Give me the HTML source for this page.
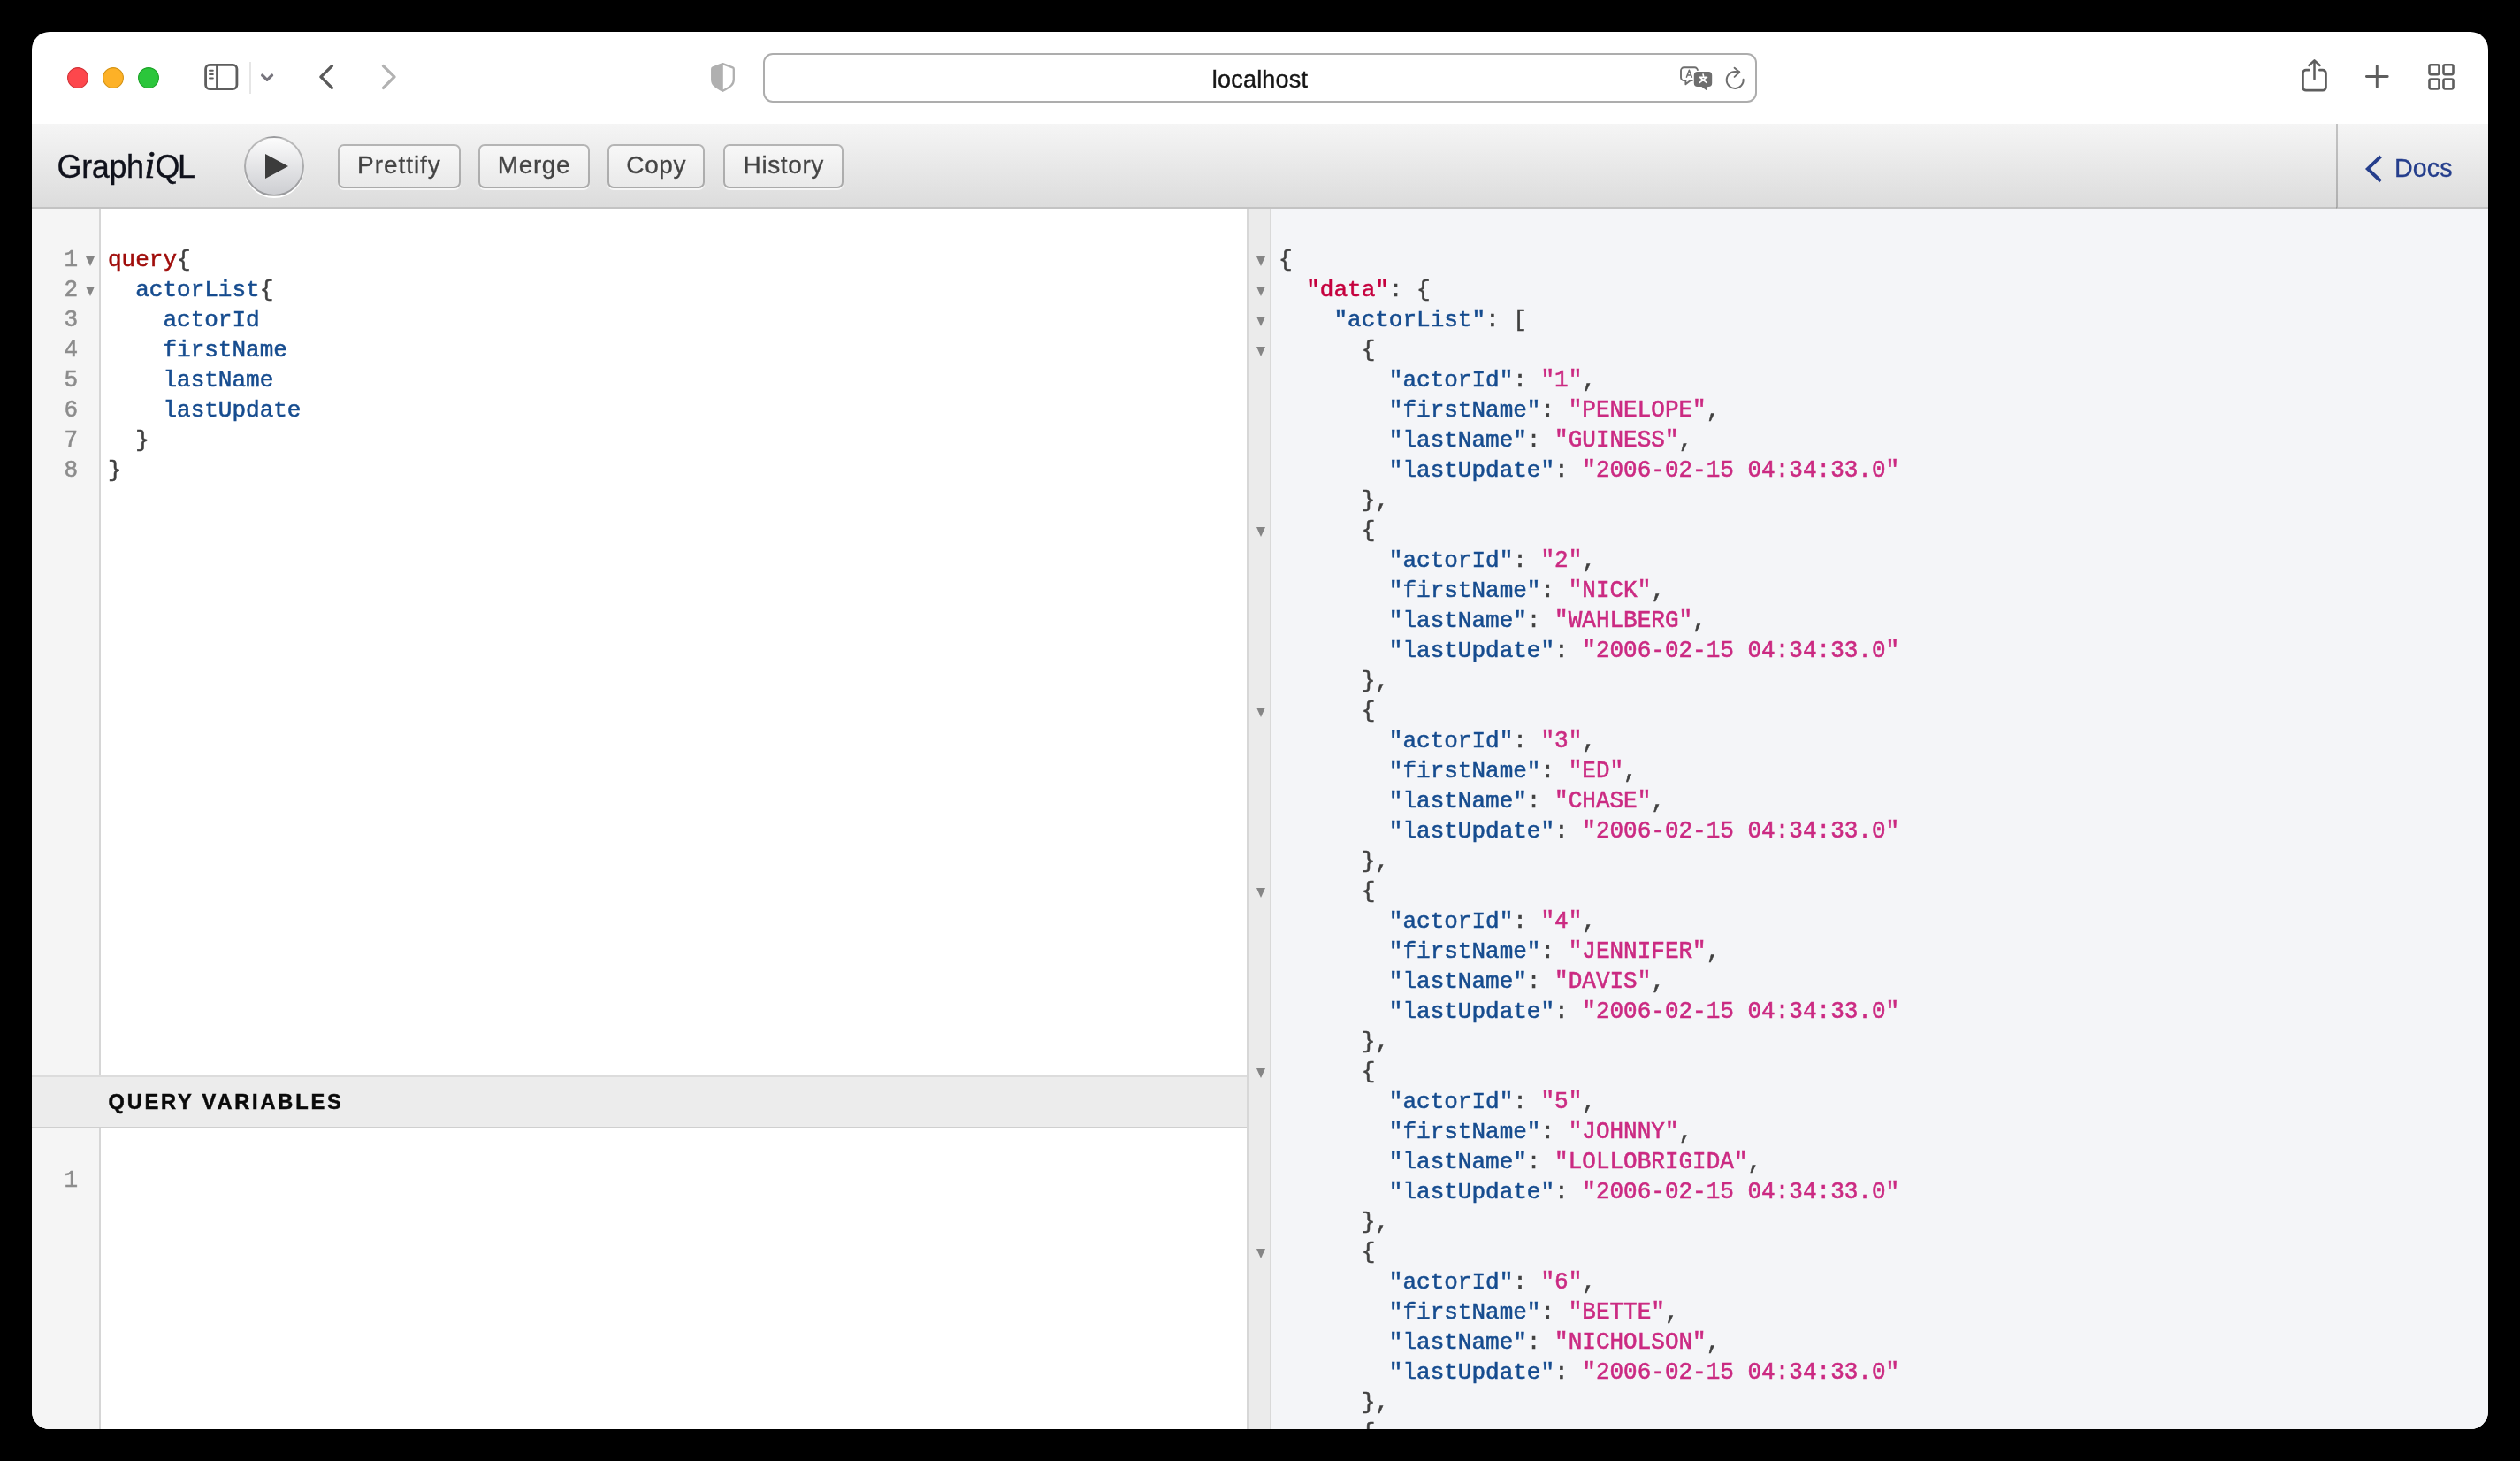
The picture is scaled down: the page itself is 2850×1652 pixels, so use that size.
<!DOCTYPE html>
<html>
<head>
<meta charset="utf-8">
<title>localhost</title>
<style>
html,body{margin:0;padding:0;background:#000;}
body{width:2850px;height:1652px;overflow:hidden;position:relative;font-family:"Liberation Sans",sans-serif;}
.win{position:absolute;left:36px;top:36px;width:2778px;height:1580px;border-radius:20px;overflow:hidden;background:#fff;}
.pg{position:absolute;left:-36px;top:-36px;width:2850px;height:1652px;will-change:transform;}
.pg *{box-sizing:border-box;}
.abs{position:absolute;}
svg{position:absolute;overflow:visible;}
/* safari toolbar */
.tl{position:absolute;top:75.5px;width:25px;height:25px;border-radius:50%;}
.url{position:absolute;left:863px;top:60px;width:1124px;height:56px;border:2px solid #adadad;border-radius:11px;background:#fff;}
.urltxt{position:absolute;left:863px;width:1124px;top:70px;height:40px;line-height:40px;text-align:center;font-size:27px;color:#161616;letter-spacing:0.2px;-webkit-text-stroke:0.4px #161616;}
/* graphiql top bar */
.topbar{position:absolute;left:36px;top:140px;width:2778px;height:96px;background:linear-gradient(#f5f5f5,#dcdcdc);border-bottom:2px solid #c3c3c3;}
.title{position:absolute;left:64.6px;top:164.6px;height:48px;line-height:48px;font-size:36px;color:#10121c;white-space:nowrap;letter-spacing:-0.4px;-webkit-text-stroke:0.35px #10121c;}
.title em{font-family:"Liberation Serif",serif;font-size:44px;font-style:italic;-webkit-text-stroke:0.7px #10121c;margin:0 -0.1px 0 0.6px;letter-spacing:0;line-height:0;}
.title b{font-weight:normal;letter-spacing:-2.4px;}
.exec{position:absolute;left:275.5px;top:154px;width:68px;height:68px;border-radius:34px;border:2px solid rgba(0,0,0,0.25);background:linear-gradient(#fcfcfc,#cdced2);box-shadow:0 2px 0 #fff;}
.tb{position:absolute;top:163.2px;height:49.4px;border-radius:7px;background:linear-gradient(#f8f8f8,#e9e9e9);box-shadow:inset 0 0 0 2px rgba(0,0,0,0.27),0 2px 0 rgba(255,255,255,0.7);color:#444;font-size:28px;line-height:48px;-webkit-text-stroke:0.3px #444;text-align:center;white-space:nowrap;}
.docs{position:absolute;left:2642px;top:140px;width:172px;height:96px;border-left:2px solid rgba(0,0,0,0.2);border-bottom:2px solid #c3c3c3;background:linear-gradient(#f5f5f5,#dcdcdc);}
.docstxt{position:absolute;left:2708px;top:169.8px;height:40px;line-height:40px;font-size:28.6px;color:#253E8C;letter-spacing:0.15px;-webkit-text-stroke:0.3px #253E8C;}
/* editors */
.gut{position:absolute;left:36px;width:78px;background:#f5f5f5;border-right:2px solid #d6d6d6;}
.mono{font-family:"Liberation Mono",monospace;font-size:26px;line-height:34px;-webkit-text-stroke-width:0.55px;}
.pre{white-space:pre;}
.lnum{position:absolute;left:36px;width:52px;text-align:right;color:#8c8c8c;}
.code{position:absolute;left:122px;top:277.3px;color:#404040;}
.kw{color:#a00d0b;}
.pr{color:#164c8f;}
.p{color:#404040;}
.k{color:#164c8f;}
.d{color:#c5003e;}
.s{color:#cb2a82;}
.fo{position:absolute;display:block;width:0;height:0;border-left:5.5px solid transparent;border-right:5.5px solid transparent;border-top:11.4px solid #858585;}
.vtitle{position:absolute;left:36px;top:1216px;width:1374px;height:60px;background:#ececec;border-top:2px solid #dcdcdc;border-bottom:2px solid #cfcfcf;}
.vtxt{position:absolute;left:122.5px;top:1226px;height:40px;line-height:40px;font-size:23.6px;font-weight:bold;letter-spacing:2.82px;color:#0a0a0a;-webkit-text-stroke:0.5px #0a0a0a;white-space:nowrap;}
.res{position:absolute;left:1410px;top:236px;width:1404px;height:1380px;background:#f4f5f8;}
.rgut{position:absolute;left:0;top:0;width:28px;height:1380px;background:#ebebeb;border-left:2px solid #d7d7d7;border-right:2px solid #d9d9d9;}
.rcode{position:absolute;left:36px;top:41.3px;}
.ln{height:34px;white-space:pre;}
.nl{height:34px;transform:scaleY(1.06);transform-origin:0 24px;}
.s{display:inline-block;transform:scaleY(1.09);transform-origin:0 24px;}
</style>
</head>
<body>
<div class="win"><div class="pg">

<!-- ============ Safari toolbar ============ -->
<svg style="left:70px;top:70px" width="120" height="36" viewBox="70 70 120 36">
  <circle cx="88" cy="88" r="11.4" fill="#fd474c" stroke="#d33237" stroke-width="1.1"/>
  <circle cx="128" cy="88" r="11.4" fill="#fdb127" stroke="#d69414" stroke-width="1.1"/>
  <circle cx="168" cy="88" r="11.4" fill="#2bc63b" stroke="#1ba326" stroke-width="1.1"/>
</svg>

<!-- sidebar icon -->
<svg style="left:228px;top:68px" width="46" height="38" viewBox="228 68 46 38">
  <rect x="232.6" y="73.3" width="35.3" height="27.2" rx="4.6" fill="none" stroke="#5e5e5e" stroke-width="2.8"/>
  <line x1="245.4" y1="73.3" x2="245.4" y2="100.5" stroke="#5e5e5e" stroke-width="2.6"/>
  <g stroke="#5e5e5e" stroke-width="2" stroke-linecap="round">
    <line x1="237" y1="79.7" x2="240.8" y2="79.7"/>
    <line x1="237" y1="84.1" x2="240.8" y2="84.1"/>
    <line x1="237" y1="88.5" x2="240.8" y2="88.5"/>
  </g>
</svg>
<div class="abs" style="left:282px;top:70px;width:2px;height:36px;background:#e6e6e6;"></div>
<svg style="left:290px;top:78px" width="24" height="20" viewBox="290 78 24 20">
  <polyline points="296.6,85 302.1,90.4 307.6,85" fill="none" stroke="#77757d" stroke-width="3.2" stroke-linecap="round" stroke-linejoin="round"/>
</svg>
<svg style="left:355px;top:68px" width="100" height="40" viewBox="355 68 100 40">
  <polyline points="375.4,74.6 362.9,86.9 375.4,99.4" fill="none" stroke="#5a5a5a" stroke-width="3.4" stroke-linecap="round" stroke-linejoin="round"/>
  <polyline points="433.5,74.6 446,86.9 433.5,99.4" fill="none" stroke="#b2b2b2" stroke-width="3.4" stroke-linecap="round" stroke-linejoin="round"/>
</svg>

<!-- shield -->
<svg style="left:800px;top:66px" width="36" height="42" viewBox="800 66 36 42">
  <defs><clipPath id="shl"><rect x="800" y="66" width="17.8" height="42"/></clipPath></defs>
  <path d="M817.5 72.1 L828.6 76.3 Q829.8 76.8 829.8 78.1 V90 C829.8 95.6 826.2 98.2 817.5 102.8 C808.8 98.2 805.2 95.6 805.2 90 V78.1 Q805.2 76.8 806.4 76.3 Z" fill="none" stroke="#b0b0b0" stroke-width="2.3" stroke-linejoin="round"/>
  <path d="M817.5 72.1 L828.6 76.3 Q829.8 76.8 829.8 78.1 V90 C829.8 95.6 826.2 98.2 817.5 102.8 C808.8 98.2 805.2 95.6 805.2 90 V78.1 Q805.2 76.8 806.4 76.3 Z" fill="#b0b0b0" clip-path="url(#shl)"/>
</svg>

<div class="url"></div>
<div class="urltxt">localhost</div>

<!-- translate icon -->
<svg style="left:1896px;top:72px" width="44" height="34" viewBox="1896 72 44 34">
  <path d="M1904.5 76.3 H1916.5 A3.5 3.5 0 0 1 1920 79.8 V87.5 A3.5 3.5 0 0 1 1916.5 91 H1911.8 L1906.4 95.3 V91 H1904.5 A3.5 3.5 0 0 1 1901 87.5 V79.8 A3.5 3.5 0 0 1 1904.5 76.3 Z" fill="#fff" stroke="#6e6e6e" stroke-width="1.9" stroke-linejoin="round"/>
  <path d="M1907.2 87.8 L1910.4 79.3 L1913.6 87.8 M1908.4 85 H1912.4" fill="none" stroke="#6e6e6e" stroke-width="1.5" stroke-linejoin="round" stroke-linecap="butt"/>
  <path d="M1919.8 81 H1932.2 A4 4 0 0 1 1936.2 85 V93.9 A4 4 0 0 1 1932.2 97.9 H1931.2 L1930.9 101.9 H1929.6 L1924.4 97.9 H1919.8 A4 4 0 0 1 1915.8 93.9 V85 A4 4 0 0 1 1919.8 81 Z" fill="#6e6e6e" stroke="#fff" stroke-width="2.4" paint-order="stroke" stroke-linejoin="round"/>
  <path d="M1921.9 87.4 H1930.5 M1926 83.9 L1926.5 85.8 M1923.5 88.4 L1930.3 93.7 M1928.9 88.4 L1921.9 93.7" fill="none" stroke="#fff" stroke-width="1.6" stroke-linecap="round"/>
</svg>
<!-- reload icon -->
<svg style="left:1946px;top:72px" width="32" height="34" viewBox="1946 72 32 34">
  <path d="M1971.6 89.6 A9.5 9.5 0 1 1 1962.1 81 L1967.2 81.3" fill="none" stroke="#6e6e6e" stroke-width="1.9" stroke-linecap="round" stroke-linejoin="round"/>
  <polyline points="1961.6,76.7 1967.3,81.5 1961.6,86.9" fill="none" stroke="#6e6e6e" stroke-width="1.9" stroke-linecap="round" stroke-linejoin="round"/>
</svg>

<!-- share -->
<svg style="left:2598px;top:62px" width="40" height="46" viewBox="2598 62 40 46">
  <path d="M2611.4 79.2 h-3.4 a3.6 3.6 0 0 0 -3.6 3.6 v15.8 a3.6 3.6 0 0 0 3.6 3.6 h18.8 a3.6 3.6 0 0 0 3.6 -3.6 v-15.8 a3.6 3.6 0 0 0 -3.6 -3.6 h-3.4" fill="none" stroke="#5e5e5e" stroke-width="2.8" stroke-linecap="round"/>
  <path d="M2617.5 89.6 v-21 M2611.4 74 l6.1 -5.7 l6.1 5.7" fill="none" stroke="#5e5e5e" stroke-width="2.5" stroke-linecap="round" stroke-linejoin="round"/>
</svg>
<!-- plus -->
<svg style="left:2670px;top:68px" width="36" height="36" viewBox="2670 68 36 36">
  <path d="M2676.4 86.5 h23.8 M2688.3 74.6 v23.8" fill="none" stroke="#5e5e5e" stroke-width="2.9" stroke-linecap="round"/>
</svg>
<!-- grid -->
<svg style="left:2742px;top:68px" width="38" height="38" viewBox="2742 68 38 38">
  <g fill="none" stroke="#5e5e5e" stroke-width="2.6">
    <rect x="2747.5" y="73.2" width="11" height="10.9" rx="1.8"/>
    <rect x="2763.5" y="73.2" width="11" height="10.9" rx="1.8"/>
    <rect x="2747.5" y="89.5" width="11" height="10.9" rx="1.8"/>
    <rect x="2763.5" y="89.5" width="11" height="10.9" rx="1.8"/>
  </g>
</svg>

<!-- ============ GraphiQL top bar ============ -->
<div class="topbar"></div>
<div class="title">Graph<em>i</em><b>QL</b></div>
<div class="exec"></div>
<svg style="left:278px;top:156px" width="68" height="68" viewBox="0 0 34 34"><path d="M 11 9 L 24 16 L 11 23 z" fill="#3c3c3c"/></svg>
<div class="tb" style="left:382.2px;width:138.5px;letter-spacing:0.95px;">Prettify</div>
<div class="tb" style="left:541.2px;width:125.6px;letter-spacing:0.6px;">Merge</div>
<div class="tb" style="left:687.1px;width:110.3px;letter-spacing:0.6px;">Copy</div>
<div class="tb" style="left:818.2px;width:136.2px;letter-spacing:0.6px;">History</div>
<div class="docs"></div>
<svg style="left:2670px;top:170px" width="30" height="42" viewBox="2670 170 30 42">
  <polyline points="2692.5,176.9 2677.8,190.9 2692.5,204.9" fill="none" stroke="#253E8C" stroke-width="3.9" stroke-linejoin="miter"/>
</svg>
<div class="docstxt">Docs</div>

<!-- ============ Query editor ============ -->
<div class="gut" style="top:236px;height:980px;"></div>
<div class="lnum mono pre" style="top:277px;"><div class="nl">1</div><div class="nl">2</div><div class="nl">3</div><div class="nl">4</div><div class="nl">5</div><div class="nl">6</div><div class="nl">7</div><div class="nl">8</div></div>
<i class="fo" style="left:96.5px;top:290px;"></i>
<i class="fo" style="left:96.5px;top:324px;"></i>
<div class="code mono pre"><span class="kw">query</span>{
  <span class="pr">actorList</span>{
    <span class="pr">actorId</span>
    <span class="pr">firstName</span>
    <span class="pr">lastName</span>
    <span class="pr">lastUpdate</span>
  }
}</div>

<!-- ============ Variable editor ============ -->
<div class="vtitle"></div>
<div class="vtxt">QUERY VARIABLES</div>
<div class="gut" style="top:1276px;height:340px;"></div>
<div class="lnum mono pre" style="top:1317.6px;"><div class="nl">1</div></div>

<!-- ============ Result ============ -->
<div class="res">
  <div class="rgut"></div>
  <div style="position:absolute;left:10.5px;top:54px;">
<i class="fo" style="top:0px"></i>
<i class="fo" style="top:34px"></i>
<i class="fo" style="top:68px"></i>
<i class="fo" style="top:102px"></i>
<i class="fo" style="top:306px"></i>
<i class="fo" style="top:510px"></i>
<i class="fo" style="top:714px"></i>
<i class="fo" style="top:918px"></i>
<i class="fo" style="top:1122px"></i>
<i class="fo" style="top:1326px"></i>
  </div>
  <div class="rcode mono">
<div class="ln"><span class="p">{</span></div>
<div class="ln">  <span class="d">"data"</span><span class="p">: {</span></div>
<div class="ln">    <span class="k">"actorList"</span><span class="p">: [</span></div>
<div class="ln">      <span class="p">{</span></div>
<div class="ln">        <span class="k">"actorId"</span><span class="p">: </span><span class="s">"1"</span><span class="p">,</span></div>
<div class="ln">        <span class="k">"firstName"</span><span class="p">: </span><span class="s">"PENELOPE"</span><span class="p">,</span></div>
<div class="ln">        <span class="k">"lastName"</span><span class="p">: </span><span class="s">"GUINESS"</span><span class="p">,</span></div>
<div class="ln">        <span class="k">"lastUpdate"</span><span class="p">: </span><span class="s">"2006-02-15 04:34:33.0"</span></div>
<div class="ln">      <span class="p">},</span></div>
<div class="ln">      <span class="p">{</span></div>
<div class="ln">        <span class="k">"actorId"</span><span class="p">: </span><span class="s">"2"</span><span class="p">,</span></div>
<div class="ln">        <span class="k">"firstName"</span><span class="p">: </span><span class="s">"NICK"</span><span class="p">,</span></div>
<div class="ln">        <span class="k">"lastName"</span><span class="p">: </span><span class="s">"WAHLBERG"</span><span class="p">,</span></div>
<div class="ln">        <span class="k">"lastUpdate"</span><span class="p">: </span><span class="s">"2006-02-15 04:34:33.0"</span></div>
<div class="ln">      <span class="p">},</span></div>
<div class="ln">      <span class="p">{</span></div>
<div class="ln">        <span class="k">"actorId"</span><span class="p">: </span><span class="s">"3"</span><span class="p">,</span></div>
<div class="ln">        <span class="k">"firstName"</span><span class="p">: </span><span class="s">"ED"</span><span class="p">,</span></div>
<div class="ln">        <span class="k">"lastName"</span><span class="p">: </span><span class="s">"CHASE"</span><span class="p">,</span></div>
<div class="ln">        <span class="k">"lastUpdate"</span><span class="p">: </span><span class="s">"2006-02-15 04:34:33.0"</span></div>
<div class="ln">      <span class="p">},</span></div>
<div class="ln">      <span class="p">{</span></div>
<div class="ln">        <span class="k">"actorId"</span><span class="p">: </span><span class="s">"4"</span><span class="p">,</span></div>
<div class="ln">        <span class="k">"firstName"</span><span class="p">: </span><span class="s">"JENNIFER"</span><span class="p">,</span></div>
<div class="ln">        <span class="k">"lastName"</span><span class="p">: </span><span class="s">"DAVIS"</span><span class="p">,</span></div>
<div class="ln">        <span class="k">"lastUpdate"</span><span class="p">: </span><span class="s">"2006-02-15 04:34:33.0"</span></div>
<div class="ln">      <span class="p">},</span></div>
<div class="ln">      <span class="p">{</span></div>
<div class="ln">        <span class="k">"actorId"</span><span class="p">: </span><span class="s">"5"</span><span class="p">,</span></div>
<div class="ln">        <span class="k">"firstName"</span><span class="p">: </span><span class="s">"JOHNNY"</span><span class="p">,</span></div>
<div class="ln">        <span class="k">"lastName"</span><span class="p">: </span><span class="s">"LOLLOBRIGIDA"</span><span class="p">,</span></div>
<div class="ln">        <span class="k">"lastUpdate"</span><span class="p">: </span><span class="s">"2006-02-15 04:34:33.0"</span></div>
<div class="ln">      <span class="p">},</span></div>
<div class="ln">      <span class="p">{</span></div>
<div class="ln">        <span class="k">"actorId"</span><span class="p">: </span><span class="s">"6"</span><span class="p">,</span></div>
<div class="ln">        <span class="k">"firstName"</span><span class="p">: </span><span class="s">"BETTE"</span><span class="p">,</span></div>
<div class="ln">        <span class="k">"lastName"</span><span class="p">: </span><span class="s">"NICHOLSON"</span><span class="p">,</span></div>
<div class="ln">        <span class="k">"lastUpdate"</span><span class="p">: </span><span class="s">"2006-02-15 04:34:33.0"</span></div>
<div class="ln">      <span class="p">},</span></div>
<div class="ln">      <span class="p">{</span></div>
  </div>
</div>

</div></div>
</body>
</html>
